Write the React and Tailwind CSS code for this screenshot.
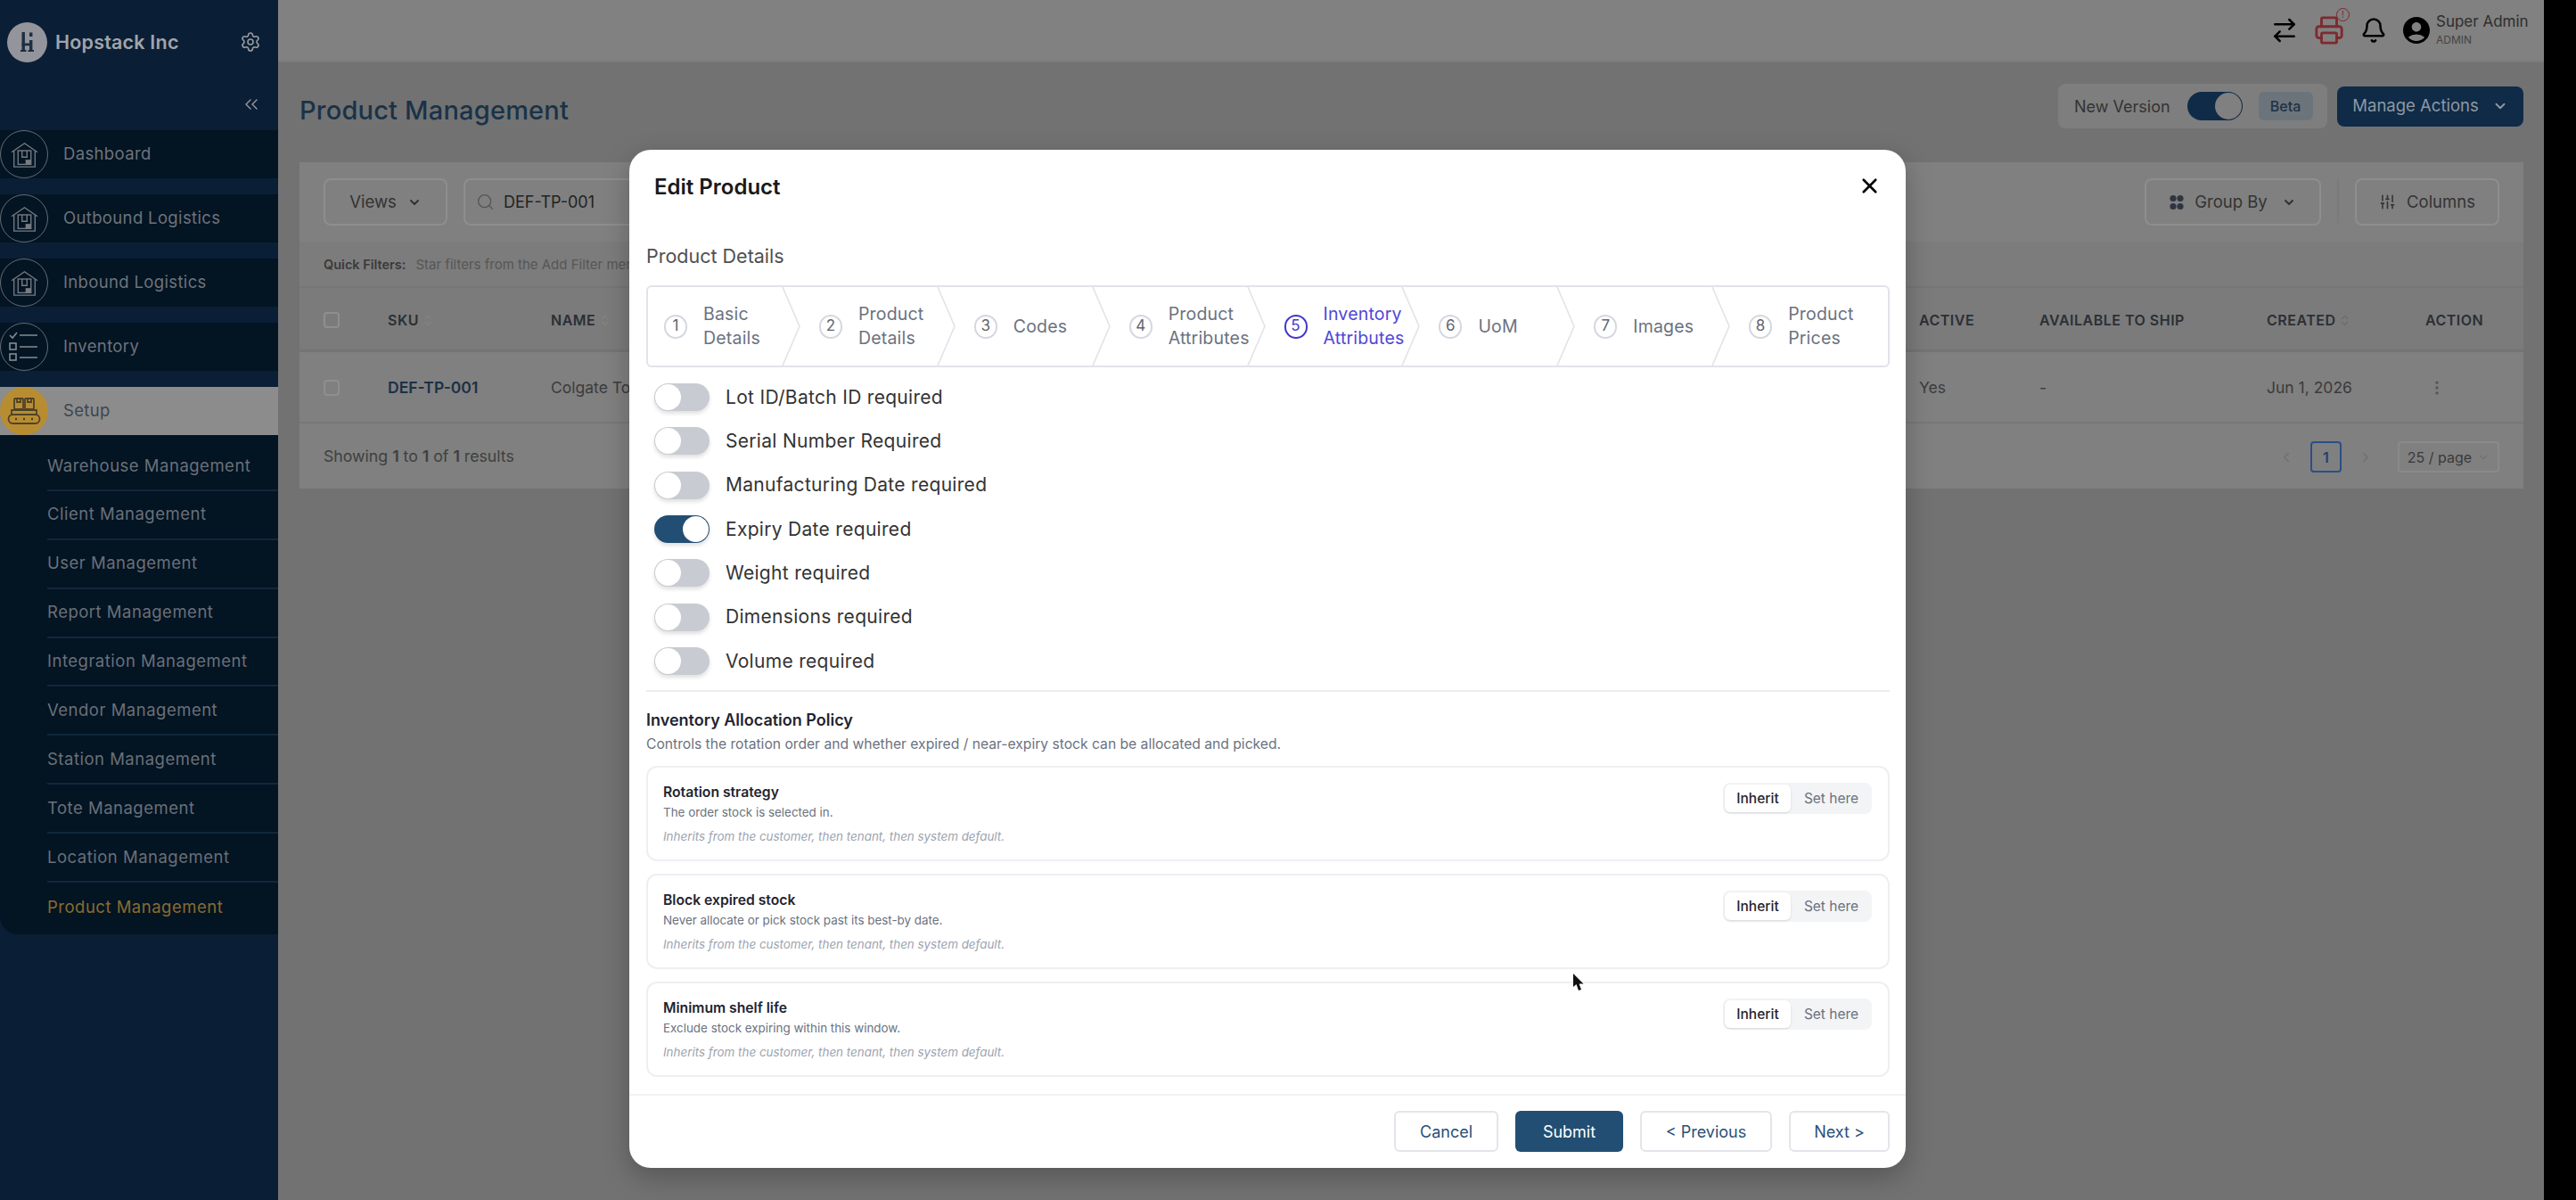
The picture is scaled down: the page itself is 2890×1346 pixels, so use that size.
import { Settings, ChevronsLeft, Search, ChevronDown, ChevronLeft, ChevronRight, ChevronsUpDown, ArrowRightLeft, Printer, Bell, SlidersVertical, MoreVertical, X } from "lucide-react"
import { MdAccountCircle } from "react-icons/md"

const navItems = [
  { label: "Dashboard", icon: "house" },
  { label: "Outbound Logistics", icon: "house" },
  { label: "Inbound Logistics", icon: "house" },
  { label: "Inventory", icon: "list" },
]

const subItems = [
  "Warehouse Management",
  "Client Management",
  "User Management",
  "Report Management",
  "Integration Management",
  "Vendor Management",
  "Station Management",
  "Tote Management",
  "Location Management",
]

const steps = [
  ["Basic", "Details"],
  ["Product", "Details"],
  ["Codes"],
  ["Product", "Attributes"],
  ["Inventory", "Attributes"],
  ["UoM"],
  ["Images"],
  ["Product", "Prices"],
]

const toggles = [
  ["Lot ID/Batch ID required", false],
  ["Serial Number Required", false],
  ["Manufacturing Date required", false],
  ["Expiry Date required", true],
  ["Weight required", false],
  ["Dimensions required", false],
  ["Volume required", false],
]

const policies = [
  ["Rotation strategy", "The order stock is selected in."],
  ["Block expired stock", "Never allocate or pick stock past its best-by date."],
  ["Minimum shelf life", "Exclude stock expiring within this window."],
]

function HouseIcon() {
  return (
    <svg width="31" height="29" viewBox="0 0 34 32" fill="none" stroke="#767c84" strokeWidth="1.5">
      <path d="M1 13 L17 2 L33 13" />
      <path d="M4 11 V31 H30 V11" />
      <rect x="9" y="11" width="16" height="17" />
      <path d="M14 11 V19 H20 V11" />
      <rect x="19" y="23" width="5" height="4" fill="#767c84" />
    </svg>
  )
}

function ListIcon() {
  return (
    <svg width="36" height="36" viewBox="0 0 36 36" fill="none" stroke="#858b92" strokeWidth="1.6">
      <path d="M2 5 L5 8 L10 2" />
      <path d="M13 5 H33 M13 18 H33 M13 30 H33" />
      <rect x="2" y="14" width="7" height="7" />
      <rect x="2" y="26" width="7" height="7" />
    </svg>
  )
}

function ConveyorIcon() {
  return (
    <svg width="38" height="34" viewBox="0 0 38 34" fill="none" stroke="#4f4326" strokeWidth="1.8">
      <rect x="8" y="3" width="10" height="12" rx="1" />
      <rect x="20" y="3" width="10" height="12" rx="1" />
      <path d="M11 3 V7 H15 V3 M23 3 V7 H27 V3" />
      <path d="M5 22 V16 H33 V22" />
      <rect x="1.5" y="21" width="35" height="10" rx="5" />
      <path d="M9 26 H11 M18 26 H20 M27 26 H29" strokeWidth="2.4" />
    </svg>
  )
}

function Logo() {
  return (
    <div className="w-[45px] h-[45px] rounded-full bg-[#94959c] flex items-center justify-center shrink-0">
      <svg width="15" height="22" viewBox="0 0 15 22" fill="#1c2f43">
        <rect x="1.5" y="0" width="3.4" height="22" />
        <rect x="10" y="9" width="3.4" height="13" />
        <rect x="10" y="0.5" width="3.4" height="4.5" />
        <rect x="1.5" y="12.5" width="11" height="2.8" />
        <rect x="0" y="20" width="6.5" height="2" />
        <rect x="8.5" y="20" width="6.5" height="2" />
      </svg>
    </div>
  )
}

function Sidebar() {
  return (
    <aside className="w-[312px] shrink-0 bg-[#0a1f35] flex flex-col">
      <div className="h-[94px] pl-2 pr-[19px] flex items-center">
        <Logo />
        <span className="ml-[9px] text-[21.5px] font-semibold text-[#a3a4ab] tracking-[0.2px] flex-1">Hopstack Inc</span>
        <Settings size={24} strokeWidth={1.6} className="text-[#9a9ba2]" />
      </div>
      <div className="h-[52px] pr-[18px] pb-[6px] flex items-center justify-end">
        <ChevronsLeft size={24} strokeWidth={1.4} className="text-[#9a9ba2]" />
      </div>
      <nav className="flex flex-col gap-[18px]">
        {navItems.map((item) => (
          <div key={item.label} className="h-[54px] bg-[#031423] flex items-center">
            <div className="w-[54px] h-[54px] rounded-full border-[1.5px] border-[#666c74] flex items-center justify-center shrink-0 bg-[#031423]">
              {item.icon === "house" ? <HouseIcon /> : <ListIcon />}
            </div>
            <span className="ml-[17px] text-[18.5px] text-[#6d737b] tracking-[0.35px]">{item.label}</span>
          </div>
        ))}
        <div className="h-[54px] bg-[#8c8c8c] flex items-center">
          <div className="w-[54px] h-[54px] rounded-full bg-[#b88d32] flex items-center justify-center shrink-0">
            <ConveyorIcon />
          </div>
          <span className="ml-[17px] text-[18.5px] text-[#3c4650] tracking-[0.35px]">Setup</span>
        </div>
      </nav>
      <div className="bg-[#031423] rounded-bl-[20px] pt-[8px] pb-[3px] pl-[53px]">
        {subItems.map((label) => (
          <div key={label} className="h-[54.9px] flex items-center border-b-2 border-[#10283c]">
            <span className="text-[18.5px] text-[#6a7078] tracking-[0.5px]">{label}</span>
          </div>
        ))}
        <div className="h-[54.9px] flex items-center">
          <span className="text-[18.5px] text-[#8a6c2e] tracking-[0.5px]">Product Management</span>
        </div>
      </div>
    </aside>
  )
}

function HeaderBar() {
  return (
    <header className="h-[70px] bg-[#818181] border-b-2 border-[#7a7a7a] flex items-center justify-end pr-[17px]">
      <ArrowRightLeft size={32} strokeWidth={1.9} className="text-black mr-[17px]" />
      <div className="relative mr-[18px]">
        <Printer size={34} strokeWidth={2} className="text-[#7d2a2f]" />
        <span className="absolute -top-[8px] -right-[6px] w-[15px] h-[15px] rounded-full border border-[#7d2a2f] bg-[#818181] text-[#7d2a2f] text-[10px] leading-[13px] text-center">!</span>
      </div>
      <Bell size={30} strokeWidth={2} className="text-black mr-[15px]" />
      <MdAccountCircle size={36} className="text-black mr-[4px]" />
      <div className="flex flex-col w-[104px]">
        <span className="text-[17px] leading-[22px] text-[#2e2e2e]">Super Admin</span>
        <span className="text-[12px] leading-[20px] text-[#444444]">ADMIN</span>
      </div>
    </header>
  )
}

function OutlineButton({ className, children }) {
  return (
    <div className={`h-[53px] rounded-lg border-2 border-[#8e8e8e] flex items-center justify-center gap-2 text-[18.5px] text-[#333] ${className}`}>
      {children}
    </div>
  )
}

function ProductTable() {
  return (
    <section className="bg-[#808080] flex flex-col h-[366px]">
      <div className="h-[89px] pt-[18px] pl-[27px] pr-[27px] flex items-start">
        <OutlineButton className="w-[139px]">
          Views <ChevronDown size={16} strokeWidth={3} className="ml-1" />
        </OutlineButton>
        <div className="ml-[18px] w-[500px] h-[53px] rounded-lg border-2 border-[#8e8e8e] flex items-center pl-[12px] text-[18px] text-[#222]">
          <Search size={21} strokeWidth={1.5} className="text-[#555] mr-[10px]" />
          DEF-TP-001
        </div>
        <OutlineButton className="w-[198px] ml-auto">
          <svg width="16" height="18" viewBox="0 0 16 18" fill="#2c3540">
            <circle cx="4" cy="4.5" r="3.6" />
            <circle cx="12" cy="4.5" r="3.6" />
            <circle cx="4" cy="13.5" r="3.6" />
            <circle cx="12" cy="13.5" r="3.6" />
          </svg>
          <span className="ml-1">Group By</span>
          <ChevronDown size={16} strokeWidth={3} className="ml-2" />
        </OutlineButton>
        <div className="w-[2px] h-[50px] bg-[#7a7a7a] mx-[18px]" />
        <OutlineButton className="w-[162px]">
          <SlidersVertical size={19} strokeWidth={2} className="mr-1" />
          Columns
        </OutlineButton>
      </div>
      <div className="h-[52px] bg-[#7c7c7c] border-b-2 border-[#767676] pl-[27px] pt-[2px] flex items-center text-[14.5px] whitespace-nowrap">
        <span className="font-semibold text-[#3a3a3a]">Quick Filters:</span>
        <span className="ml-[11px] text-[15px] text-[#565656]">Star filters from the Add Filter menu</span>
      </div>
      <div className="h-[72px] bg-[#7b7b7b] border-b-[3px] border-[#747474] pl-[27px] pt-[3px] grid grid-cols-[72px_183px_1535px_135px_255px_178px_1fr] items-center text-[16px] font-semibold text-[#2b2f36] tracking-[0.5px]">
        <div className="w-[18px] h-[18px] rounded border-2 border-[#8f8f8f]" />
        <div className="flex items-center gap-[3px]">SKU <ChevronsUpDown size={15} strokeWidth={1.2} className="text-[#8f8f8f]" /></div>
        <div className="flex items-center gap-[3px]">NAME <ChevronsUpDown size={15} strokeWidth={1.2} className="text-[#8f8f8f]" /></div>
        <div>ACTIVE</div>
        <div>AVAILABLE TO SHIP</div>
        <div className="flex items-center gap-[3px]">CREATED <ChevronsUpDown size={15} strokeWidth={1.2} className="text-[#555]" /></div>
        <div>ACTION</div>
      </div>
      <div className="h-[80px] border-b-2 border-[#777] pl-[27px] pt-[2px] grid grid-cols-[72px_183px_1535px_135px_255px_178px_1fr] items-center text-[17.5px] text-[#3b3b3b]">
        <div className="w-[18px] h-[18px] rounded border-2 border-[#8f8f8f]" />
        <div className="font-semibold text-[#1c3045]">DEF-TP-001</div>
        <div>Colgate Toothpaste</div>
        <div>Yes</div>
        <div>-</div>
        <div>Jun 1, 2026</div>
        <div className="pl-[3px]"><MoreVertical size={20} strokeWidth={2} className="text-[#555]" /></div>
      </div>
      <div className="flex-1 pl-[27px] pr-[27px] pt-[2px] flex items-center text-[17.7px] text-[#3f3f3f]">
        <span>Showing <b className="font-semibold">1</b> to <b className="font-semibold">1</b> of <b className="font-semibold">1</b> results</span>
        <div className="ml-auto flex items-center">
          <ChevronLeft size={18} className="text-[#707070] mr-[18px]" />
          <div className="w-[35px] h-[35px] rounded border-2 border-[#2a4f85] text-[#1f3f72] text-[16px] font-semibold flex items-center justify-center">1</div>
          <ChevronRight size={18} className="text-[#707070] ml-[18px] mr-[27px]" />
          <div className="w-[114px] h-[35px] rounded border-2 border-[#8a8a8a] flex items-center justify-center gap-[6px] text-[16px] text-[#3a3a3a]">
            25 / page <ChevronDown size={14} className="text-[#707070]" />
          </div>
        </div>
      </div>
    </section>
  )
}

function Content() {
  return (
    <div className="flex-1 bg-[#727272] flex flex-col">
      <HeaderBar />
      <div className="pl-[24px] pr-[23px]">
        <div className="h-[112px] pb-[4px] flex items-center">
          <h1 className="text-[29px] font-medium text-[#1a3248] tracking-[0.2px]">Product Management</h1>
          <div className="ml-auto mb-[10px] h-[50px] w-[302px] bg-[#7e7e7e] rounded-lg pl-[18px] flex items-center">
            <span className="text-[18px] text-[#333]">New Version</span>
            <div className="ml-[19px] w-[62px] h-[32px] rounded-full bg-[#0f2b47] flex items-center justify-end pr-[1px]">
              <div className="w-[30px] h-[30px] rounded-full bg-[#808080]" />
            </div>
            <span className="ml-[18px] w-[61px] h-[32px] rounded-md bg-[#6c747b] flex items-center justify-center text-[16px] font-medium text-[#1e3246]">Beta</span>
          </div>
          <div className="ml-[11px] mb-[10px] w-[209px] h-[45px] rounded-lg bg-[#0f2b47] flex items-center justify-center gap-[15px] text-[18.5px] text-[#8d98a4]">
            Manage Actions <ChevronDown size={18} strokeWidth={2.5} />
          </div>
        </div>
        <ProductTable />
      </div>
    </div>
  )
}

function Stepper() {
  return (
    <div className="h-[92px] border-2 border-[#e2e3ea] rounded-md grid grid-cols-8">
      {steps.map((lines, i) => {
        const active = i === 4
        return (
          <div key={i} className="relative flex items-center pl-[18px]">
            <span className={`w-[26px] h-[27px] rounded-full border-2 flex items-center justify-center text-[17px] shrink-0 ${active ? "border-[#4338ca] text-[#4338ca]" : "border-[#d5d7df] text-[#5f6570]"}`}>
              {i + 1}
            </span>
            <div className={`ml-[18px] text-[19.5px] leading-[27px] tracking-[0.2px] whitespace-nowrap ${active ? "text-[#4f46d8]" : "text-[#6b7280]"}`}>
              {lines.map((line) => <div key={line}>{line}</div>)}
            </div>
            {i < 7 && (
              <svg className="absolute top-0 right-[2px] z-10" width="22" height="88" viewBox="0 0 22 88" fill="none" stroke="#e2e3ea" strokeWidth="1.6">
                <path d="M1 0 L20 44 L1 88" />
              </svg>
            )}
          </div>
        )
      })}
    </div>
  )
}

function Toggle({ on }) {
  return (
    <div className={`w-[62px] h-[31px] rounded-full flex items-center shadow-[0_3px_4px_rgba(0,0,0,0.12)] ${on ? "bg-[#224e73] justify-end pr-[1px]" : "bg-[#c9cbd3] pl-[1px]"}`}>
      <div className="w-[29px] h-[29px] rounded-full bg-white" />
    </div>
  )
}

function PolicyCard({ title, desc }) {
  return (
    <div className="h-[107px] rounded-xl border-2 border-[#eeeff3] pl-[17px] pr-[18px] pt-[17px] flex items-start">
      <div className="flex-1">
        <div className="text-[15.7px] leading-[22px] font-semibold text-[#1f2430]">{title}</div>
        <div className="text-[13.4px] leading-[22px] text-[#6b7280]">{desc}</div>
        <div className="mt-[5px] text-[13.4px] leading-[22px] italic text-[#9ca3af]">Inherits from the customer, then tenant, then system default.</div>
      </div>
      <div className="w-[167px] h-[35px] rounded-lg bg-[#f3f4f6] flex items-center pl-[2px] text-[15.5px]">
        <div className="w-[74px] h-[31px] rounded-md bg-white shadow-sm flex items-center justify-center font-medium text-[#1f2430]">Inherit</div>
        <div className="flex-1 text-center text-[#6b7280]">Set here</div>
      </div>
    </div>
  )
}

function FooterButton({ className, children }) {
  return (
    <div className={`h-[46px] rounded-md flex items-center justify-center text-[18px] ${className}`}>{children}</div>
  )
}

function EditProductModal() {
  return (
    <div className="absolute left-[706px] top-[168px] w-[1432px] h-[1142px] bg-white rounded-[24px] shadow-[0_10px_30px_rgba(0,0,0,0.25)] flex flex-col">
      <div className="h-[80px] pl-[28px] pr-[27px] flex items-center justify-between shrink-0">
        <h2 className="mt-[3px] text-[24px] font-semibold text-[#1a1a1a]">Edit Product</h2>
        <X size={27} strokeWidth={2.4} className="text-black" />
      </div>
      <div className="flex-1 pl-[19px] pr-[18px]">
        <div className="h-[72px] pt-[26px] text-[21.5px] leading-[26px] text-[#505050]">Product Details</div>
        <Stepper />
        <div className="mt-[9px] flex flex-col">
          {toggles.map(([label, on]) => (
            <div key={label} className="h-[49.3px] pl-[9px] flex items-center gap-[18px]">
              <Toggle on={on} />
              <span className="text-[21px] text-[#333] tracking-[0.3px]">{label}</span>
            </div>
          ))}
        </div>
        <div className="mt-[8px] border-t-2 border-[#ecedf1]" />
        <h3 className="mt-[20px] text-[18px] leading-[24px] font-semibold text-[#1f2430]">Inventory Allocation Policy</h3>
        <p className="mt-[3px] text-[15.65px] leading-[24px] text-[#6b7280]">Controls the rotation order and whether expired / near-expiry stock can be allocated and picked.</p>
        <div className="mt-[12px] flex flex-col gap-[14px]">
          {policies.map(([title, desc]) => <PolicyCard key={title} title={title} desc={desc} />)}
        </div>
      </div>
      <div className="h-[83px] border-t-2 border-[#f0f1f4] pt-[17px] pr-[18px] flex justify-end gap-[19px] shrink-0">
        <FooterButton className="w-[117px] border-2 border-[#e4e5ea] text-[#2a5078]">Cancel</FooterButton>
        <FooterButton className="w-[121px] bg-[#224e73] text-white">Submit</FooterButton>
        <FooterButton className="w-[148px] border-2 border-[#e4e5ea] text-[#2a5078]">&lt; Previous</FooterButton>
        <FooterButton className="w-[113px] border-2 border-[#e4e5ea] text-[#2a5078]">Next &gt;</FooterButton>
      </div>
    </div>
  )
}

function Cursor() {
  return (
    <svg className="absolute left-[1764px] top-[1092px]" width="14" height="21" viewBox="0 0 14 21" fill="#111">
      <path d="M1 0 V15 L4.5 12 L7 19 L10 18 L7.5 11.5 L12.5 11.5 Z" />
    </svg>
  )
}

export default function App() {
  return (
    <div className="h-screen w-full bg-black flex overflow-hidden font-['Inter',sans-serif]">
      <div className="relative w-[2854px] h-full shrink-0 flex bg-[#0a1f35]">
        <Sidebar />
        <Content />
        <EditProductModal />
        <Cursor />
      </div>
    </div>
  )
}
